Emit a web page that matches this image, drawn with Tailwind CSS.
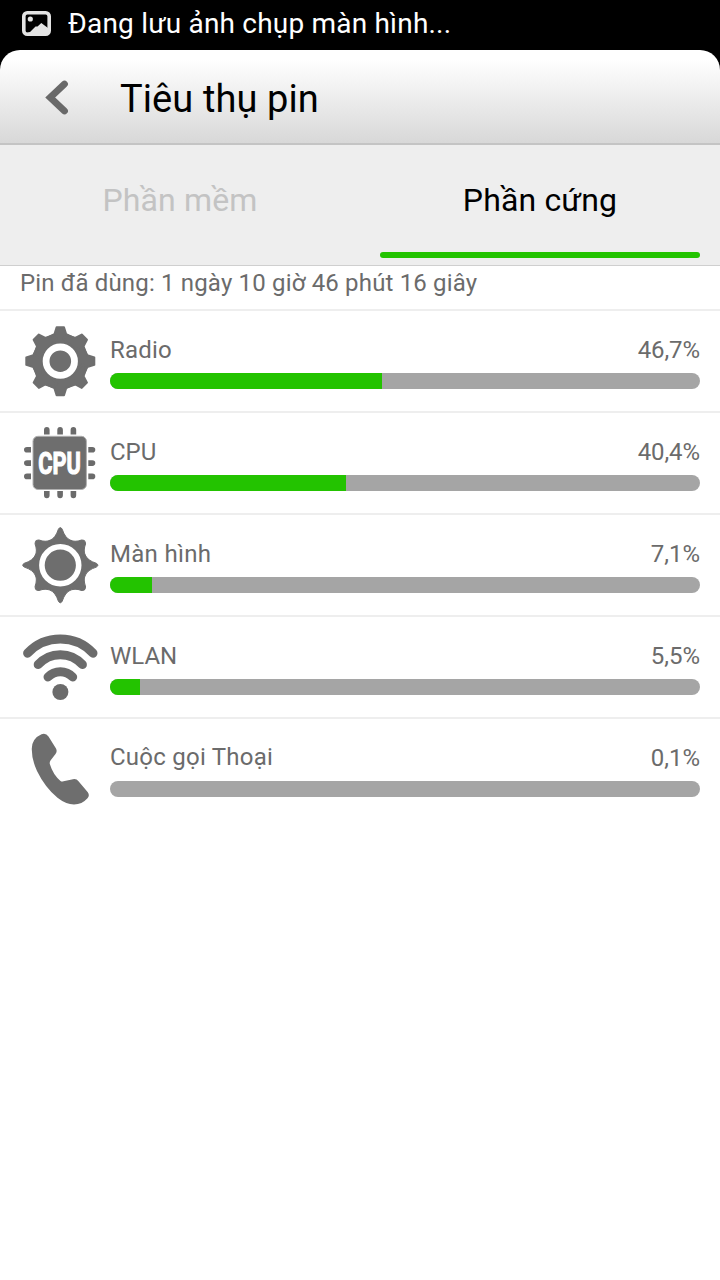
<!DOCTYPE html>
<html lang="vi">
<head>
    <meta charset="UTF-8">
    <meta name="viewport" content="width=device-width, initial-scale=1.0">
    <title>Tiêu thụ pin</title>
    <script src="https://cdn.jsdelivr.net/npm/@tailwindcss/browser@4"></script>
</head>
<body class="bg-black font-[Roboto,sans-serif]">
    <div class="w-[720px] h-[1280px] overflow-hidden flex flex-col">
        <!-- Status bar -->
        <div class="h-[50px] shrink-0 flex items-center pl-[22px] gap-[17px] pb-[3px]">
            <svg class="w-[29px] h-[25px]" viewBox="0 0 29 25">
                <rect x="1.8" y="1.8" width="25.4" height="21.4" rx="3.5" fill="none" stroke="#e4e4e4" stroke-width="3.6"/>
                <circle cx="8.3" cy="8" r="2.6" fill="#e4e4e4"/>
                <path d="M3 22.5 L8 21 L13.5 15.6 L15.5 15.6 L19.3 12 L26 17 V23 H3 Z" fill="#e4e4e4"/>
            </svg>
            <span class="text-[28px] leading-none tracking-[0.2px] text-white whitespace-nowrap">Đang lưu ảnh chụp màn hình...</span>
        </div>

        <!-- Header -->
        <div class="h-[95px] shrink-0 flex items-center rounded-t-[20px] border-b-2 border-[#c4c4c4] bg-linear-to-b from-white from-10% to-[#d8d8d8] pl-[44px]">
            <svg class="w-[26px] h-[36px]" viewBox="0 0 26 36">
                <path d="M20.5 5 L6.2 18.6 L20.5 32" fill="none" stroke="#696969" stroke-width="6.8" stroke-linecap="round" stroke-linejoin="miter"/>
            </svg>
            <h1 class="ml-[50px] mt-[5px] text-[38px] leading-none tracking-[0.1px] text-black">Tiêu thụ pin</h1>
        </div>

        <!-- Tabs -->
        <div class="h-[121px] shrink-0 grid grid-cols-2 bg-[#eeeeee] border-b border-[#cfcfcf] text-[32px] leading-none tracking-[0.15px] text-center">
            <div class="pt-[39px] text-[#c3c3c3]">Phần mềm</div>
            <div class="pt-[39px] px-5 pb-[7px] flex flex-col justify-between text-black">
                <span>Phần cứng</span>
                <div class="h-1.5 rounded-full bg-[#23c300]"></div>
            </div>
        </div>

        <!-- Usage list -->
        <div class="grow bg-white text-2xl/6 text-[#6b6b6b]">
            <div class="h-[43px] pl-5 pt-[5px] tracking-[0.17px]">Pin đã dùng: 1 ngày 10 giờ 46 phút 16 giây</div>

            <div class="h-[102px] border-t-2 border-[#eeeeee] flex items-center pl-5 pr-5">
                <svg class="size-20 shrink-0" viewBox="0 0 80 80">
                    <defs>
                        <path id="tooth" d="M36.6 6.2 H44 L46.2 13.2 L54 17 V22 H26.6 V17 L34.4 13.2 Z"/>
                    </defs>
                    <g fill="#6e6e6e" stroke="#6e6e6e" stroke-width="2" stroke-linejoin="round">
                        <circle cx="40.3" cy="40.2" r="25.5"/>
                        <use href="#tooth"/>
                        <use href="#tooth" transform="rotate(45 40.3 40.2)"/>
                        <use href="#tooth" transform="rotate(90 40.3 40.2)"/>
                        <use href="#tooth" transform="rotate(135 40.3 40.2)"/>
                        <use href="#tooth" transform="rotate(180 40.3 40.2)"/>
                        <use href="#tooth" transform="rotate(225 40.3 40.2)"/>
                        <use href="#tooth" transform="rotate(270 40.3 40.2)"/>
                        <use href="#tooth" transform="rotate(315 40.3 40.2)"/>
                    </g>
                    <circle cx="40.3" cy="40.2" r="14.2" fill="none" stroke="#fff" stroke-width="6.8"/>
                </svg>
                <div class="grow ml-2.5 mt-1">
                    <div class="flex justify-between"><span class="tracking-[0.2px]">Radio</span><span class="tracking-[-0.1px]">46,7%</span></div>
                    <div class="mt-[11px] h-4 rounded-full overflow-hidden bg-[#a5a5a5]"><div class="h-4 w-[272px] bg-[#23c300]"></div></div>
                </div>
            </div>

            <div class="h-[102px] border-t-2 border-[#eeeeee] flex items-center pl-5 pr-5">
                <svg class="size-20 shrink-0" viewBox="0 0 80 80">
                    <!-- pins -->
                    <g fill="#6b6b6b">
                        <path d="M24 11.5 V7 Q24 4 26.8 4 Q29.6 4 29.6 7 V11.5 Z M37.3 11.5 V7 Q37.3 4 40.1 4 Q42.9 4 42.9 7 V11.5 Z M50.6 11.5 V7 Q50.6 4 53.4 4 Q56.2 4 56.2 7 V11.5 Z"/>
                        <path d="M24 68 V72.3 Q24 75.2 26.8 75.2 Q29.6 75.2 29.6 72.3 V68 Z M37.3 68 V72.3 Q37.3 75.2 40.1 75.2 Q42.9 75.2 42.9 72.3 V68 Z M50.6 68 V72.3 Q50.6 75.2 53.4 75.2 Q56.2 75.2 56.2 72.3 V68 Z"/>
                        <path d="M11 24 H7 Q4 24 4 26.8 Q4 29.6 7 29.6 H11 Z M11 37.3 H7 Q4 37.3 4 40.1 Q4 42.9 7 42.9 H11 Z M11 50.6 H7 Q4 50.6 4 53.4 Q4 56.2 7 56.2 H11 Z"/>
                        <path d="M68.3 24 H72.3 Q75.3 24 75.3 26.8 Q75.3 29.6 72.3 29.6 H68.3 Z M68.3 37.3 H72.3 Q75.3 37.3 75.3 40.1 Q75.3 42.9 72.3 42.9 H68.3 Z M68.3 50.6 H72.3 Q75.3 50.6 75.3 53.4 Q75.3 56.2 72.3 56.2 H68.3 Z"/>
                    </g>
                    <rect x="13" y="13.3" width="53.4" height="53.2" rx="5" fill="#6e6e6e" stroke="#b0b0b0"/>
                    <text x="18.3" y="51.2" textLength="42.6" lengthAdjust="spacingAndGlyphs" font-family="Roboto" font-weight="700" font-size="32" fill="#fff" stroke="#fff" stroke-width="1.2">CPU</text>
                </svg>
                <div class="grow ml-2.5 mt-1">
                    <div class="flex justify-between"><span>CPU</span><span class="tracking-[-0.1px]">40,4%</span></div>
                    <div class="mt-[11px] h-4 rounded-full overflow-hidden bg-[#a5a5a5]"><div class="h-4 w-[236px] bg-[#23c300]"></div></div>
                </div>
            </div>

            <div class="h-[102px] border-t-2 border-[#eeeeee] flex items-center pl-5 pr-5">
                <svg class="size-20 shrink-0" viewBox="0 0 80 80">
                    <defs>
                        <path id="ray" d="M38.4 4.2 Q40.3 1 42.2 4.2 Q45 13 50.7 15.4 L40.3 40.2 L29.9 15.4 Q35.6 13 38.4 4.2 Z"/>
                        <path id="rayShort" d="M37.6 7.2 Q40.3 4.6 43 7.2 Q46 13.6 50.7 15.4 L40.3 40.2 L29.9 15.4 Q34.6 13.6 37.6 7.2 Z"/>
                    </defs>
                    <g fill="#6e6e6e" stroke="#6e6e6e" stroke-width="1">
                        <use href="#ray"/>
                        <use href="#ray" transform="rotate(90 40.3 40.2)"/>
                        <use href="#ray" transform="rotate(180 40.3 40.2)"/>
                        <use href="#ray" transform="rotate(270 40.3 40.2)"/>
                        <use href="#rayShort" transform="rotate(45 40.3 40.2)"/>
                        <use href="#rayShort" transform="rotate(135 40.3 40.2)"/>
                        <use href="#rayShort" transform="rotate(225 40.3 40.2)"/>
                        <use href="#rayShort" transform="rotate(315 40.3 40.2)"/>
                    </g>
                    <circle cx="40.3" cy="40.2" r="18.4" fill="#6e6e6e" stroke="#fff" stroke-width="5.6"/>
                </svg>
                <div class="grow ml-2.5 mt-1">
                    <div class="flex justify-between"><span class="tracking-[0.3px]">Màn hình</span><span>7,1%</span></div>
                    <div class="mt-[11px] h-4 rounded-full overflow-hidden bg-[#a5a5a5]"><div class="h-4 w-[42px] bg-[#23c300]"></div></div>
                </div>
            </div>

            <div class="h-[102px] border-t-2 border-[#eeeeee] flex items-center pl-5 pr-5">
                <svg class="size-20 shrink-0" viewBox="0 0 80 80">
                    <g fill="none" stroke="#6b6b6b" stroke-width="9" stroke-linecap="round">
                        <path d="M7.6 26.2 A45 45 0 0 1 73 26.2"/>
                        <path d="M18.2 37.6 A29.5 29.5 0 0 1 62.4 37.6"/>
                        <path d="M28 50 A17 17 0 0 1 52.7 50"/>
                    </g>
                    <circle cx="40.4" cy="65" r="8" fill="#6b6b6b"/>
                </svg>
                <div class="grow ml-2.5 mt-1">
                    <div class="flex justify-between"><span>WLAN</span><span>5,5%</span></div>
                    <div class="mt-[11px] h-4 rounded-full overflow-hidden bg-[#a5a5a5]"><div class="h-4 w-[30px] bg-[#23c300]"></div></div>
                </div>
            </div>

            <div class="h-[102px] border-t-2 border-[#eeeeee] flex items-center pl-5 pr-5">
                <svg class="size-20 shrink-0" viewBox="0 0 80 80">
                    <path d="M21.5 5.3 Q26 3.8 28.5 7.5 L36 19.5 Q37.5 22.3 35.5 25 L30.5 31.5 Q29.2 33.3 30 35.5 Q33 45.5 40.5 52 Q41.8 53 43.5 52.3 L53 50.2 Q56.5 49.5 58.5 52.3 L67.8 63.3 Q70 66.5 67.5 69.3 Q62 75.5 54 75.5 Q46 75.5 37.5 68.8 Q25 58.5 17 42 Q11.5 30 11.8 19.5 Q12 9.5 21.5 5.3 Z" fill="#6e6e6e"/>
                </svg>
                <div class="grow ml-2.5 mt-1">
                    <div class="flex justify-between"><span class="-mt-px tracking-[0.25px]">Cuộc gọi Thoại</span><span>0,1%</span></div>
                    <div class="mt-[11px] h-4 rounded-full bg-[#a5a5a5]"></div>
                </div>
            </div>
        </div>
    </div>
</body>
</html>
